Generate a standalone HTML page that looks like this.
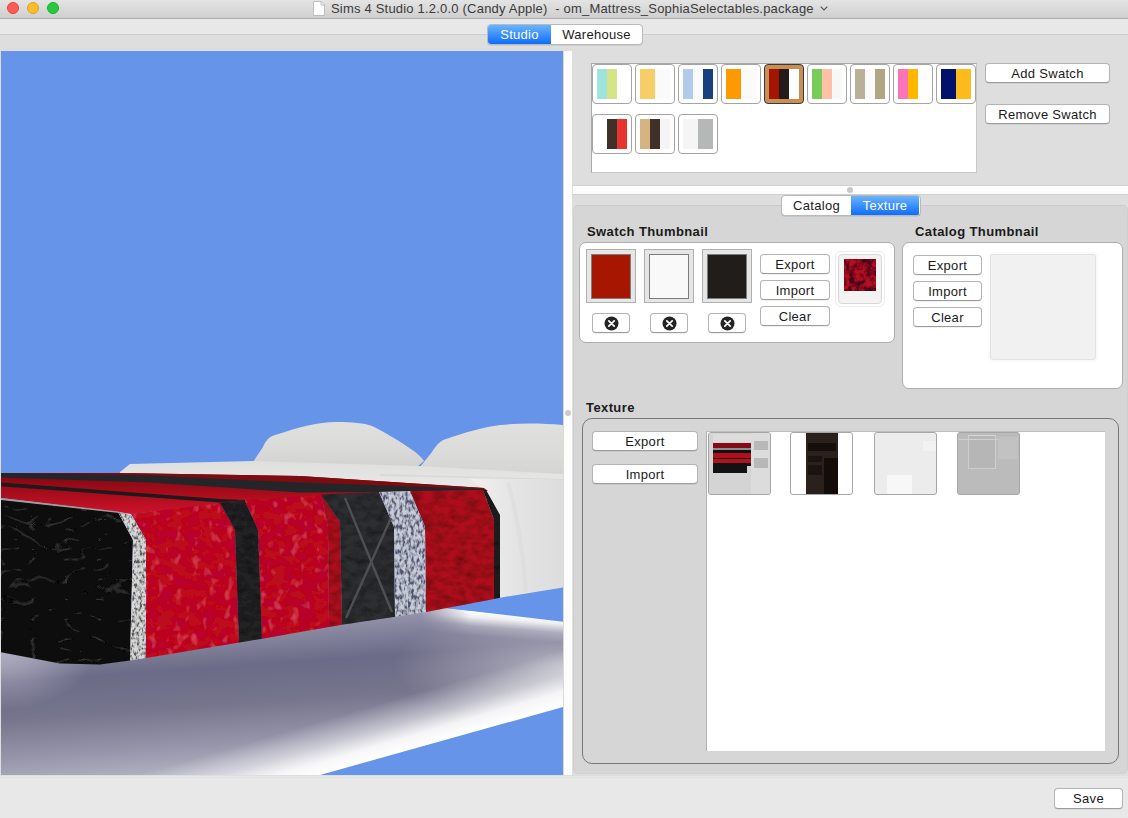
<!DOCTYPE html>
<html><head><meta charset="utf-8">
<style>
*{box-sizing:border-box;margin:0;padding:0}
html,body{width:1128px;height:818px;overflow:hidden;background:#e8e8e8;font-family:"Liberation Sans",sans-serif;font-size:13px;color:#1a1a1a;letter-spacing:0.3px}
.a{position:absolute}
#title{left:0;top:0;width:1128px;height:19px;background:linear-gradient(#e4e4e4,#cfcfcf);border-bottom:1px solid #adadad}
.light{width:12px;height:12px;border-radius:50%;top:2px}
#ttext{left:331px;top:1px;font-size:13px;color:#3a3a3a;letter-spacing:0.2px;white-space:pre}
#toolbar{left:0;top:19px;width:1128px;height:16px;background:#e8e8e8;border-bottom:1px solid #cdcdcd}
#content{left:0;top:35px;width:1128px;height:741px;background:#dedede}
.seg{height:21px;border-radius:4px;border:1px solid #b9b9b9;background:#fff;display:flex;overflow:hidden;box-shadow:0 0.5px 0.5px rgba(0,0,0,.15)}
.seg div{height:100%;text-align:center;line-height:19px;font-size:13px}
.seg .on{background:linear-gradient(#6cb3fa,#0d6efc);color:#fff}
#view{left:1px;top:51px;width:562px;height:724px;background:#6594e8;overflow:hidden}
#split{left:563px;top:51px;width:9px;height:724px;background:#fdfdfd;border-left:1px solid #dcd8d4}
#bottom{left:0;top:777px;width:1128px;height:41px;background:#e8e8e8;border-top:1px solid #e2e2e2}
.btn{background:#fff;border:1px solid #b4b4b4;border-bottom-color:#9c9c9c;border-radius:4px;text-align:center;font-size:13px;color:#1a1a1a;box-shadow:0 0.5px 0.5px rgba(0,0,0,.12)}
.sw{width:40px;height:40px;background:#fff;border:1px solid #a4a4a4;border-radius:4px}
.sw i{position:absolute;top:4px;height:30px}
.lbl{font-weight:bold;font-size:13px;color:#1a1a1a;letter-spacing:0.4px}
.grp{background:#fff;border:1px solid #adadad;border-radius:7px}
.well{width:50px;height:54px;background:#e6e6e6;border:1px solid #b0b0b0}
.well i{position:absolute;left:4px;top:4px;width:40px;height:45px;border:1px solid #7d7d7d}
.xb{width:38px;height:20px}
.xb b{position:absolute;left:11px;top:2px;width:14px;height:14px;border-radius:50%;background:#222;color:#fff}
.tt{width:63px;height:63px;border:1px solid #a6a6a6;border-radius:3px;overflow:hidden}
</style></head><body>
<div id="title" class="a">
  <div class="a light" style="left:7px;background:#fd5b55;border:0.5px solid #e0443e"></div>
  <div class="a light" style="left:27px;background:#fdbb2d;border:0.5px solid #dea123"></div>
  <div class="a light" style="left:47px;background:#27c93f;border:0.5px solid #1dad2b"></div>
  <svg class="a" style="left:313px;top:1px" width="12" height="15" viewBox="0 0 12 15"><path d="M0.5 0.5H8L11.5 4V14.5H0.5Z" fill="#fff" stroke="#b0b0b0" stroke-width="0.8"/><path d="M8 0.5V4H11.5" fill="none" stroke="#b0b0b0" stroke-width="0.8"/></svg>
  <div id="ttext" class="a">Sims 4 Studio 1.2.0.0 (Candy Apple)  - om_Mattress_SophiaSelectables.package</div>
  <svg class="a" style="left:820px;top:6px" width="8" height="5" viewBox="0 0 8 5"><path d="M0.7 0.7L4 4L7.3 0.7" fill="none" stroke="#555" stroke-width="1.2"/></svg>
</div>
<div id="toolbar" class="a"></div>
<div id="content" class="a"></div>
<div class="a seg" style="left:487px;top:24px;width:156px">
  <div class="on" style="width:63px">Studio</div><div style="width:91px">Warehouse</div>
</div>
<div id="view" class="a"><svg width="562" height="724" viewBox="1 51 562 724" style="position:absolute;left:0;top:0">
<defs>
 <linearGradient id="plat" gradientUnits="userSpaceOnUse" x1="300" y1="605" x2="312" y2="775">
  <stop offset="0" stop-color="#b4b3c4"/>
  <stop offset="0.12" stop-color="#8f8ea6"/>
  <stop offset="0.33" stop-color="#6c6b87"/>
  <stop offset="0.55" stop-color="#76758d"/>
  <stop offset="0.78" stop-color="#9695aa"/>
  <stop offset="1" stop-color="#bdbccb"/>
 </linearGradient>
 <linearGradient id="platHi" gradientUnits="userSpaceOnUse" x1="441" y1="741" x2="426" y2="690">
  <stop offset="0" stop-color="#ffffff" stop-opacity="1"/>
  <stop offset="0.25" stop-color="#ffffff" stop-opacity="0.9"/>
  <stop offset="0.55" stop-color="#ffffff" stop-opacity="0.45"/>
  <stop offset="1" stop-color="#ffffff" stop-opacity="0"/>
 </linearGradient>
 <linearGradient id="platTop" gradientUnits="userSpaceOnUse" x1="500" y1="613" x2="498" y2="638">
  <stop offset="0" stop-color="#ffffff" stop-opacity="1"/>
  <stop offset="0.25" stop-color="#ffffff" stop-opacity="0.85"/>
  <stop offset="0.6" stop-color="#ffffff" stop-opacity="0.25"/>
  <stop offset="1" stop-color="#ffffff" stop-opacity="0"/>
 </linearGradient>
 <linearGradient id="fadeX" gradientUnits="userSpaceOnUse" x1="420" y1="0" x2="470" y2="0">
  <stop offset="0" stop-color="#fff" stop-opacity="0"/><stop offset="1" stop-color="#fff" stop-opacity="1"/>
 </linearGradient>
 <mask id="mX"><rect x="0" y="0" width="600" height="800" fill="url(#fadeX)"/></mask>
 <linearGradient id="sheet" x1="0" y1="0" x2="0" y2="1">
  <stop offset="0" stop-color="#dededd"/><stop offset="1" stop-color="#ebebeb"/>
 </linearGradient>
 <linearGradient id="mat" x1="0" y1="0" x2="1" y2="0">
  <stop offset="0" stop-color="#f0f0f0"/><stop offset="0.5" stop-color="#e4e4e4"/><stop offset="1" stop-color="#dddddd"/>
 </linearGradient>
 <linearGradient id="pil" x1="0" y1="0" x2="0" y2="1">
  <stop offset="0" stop-color="#e0e0de"/><stop offset="0.6" stop-color="#dadad8"/><stop offset="1" stop-color="#d2d2d1"/>
 </linearGradient>
 <linearGradient id="topred" gradientUnits="userSpaceOnUse" x1="0" y1="473" x2="0" y2="512">
  <stop offset="0" stop-color="#7a0810"/><stop offset="0.45" stop-color="#a20c1a"/><stop offset="1" stop-color="#cc122a"/>
 </linearGradient>
 <filter id="noise" x="0" y="0" width="100%" height="100%">
  <feTurbulence type="fractalNoise" baseFrequency="0.09 0.14" numOctaves="3" seed="3" result="t"/>
  <feColorMatrix in="t" type="matrix" values="0 0 0 0 0  0 0 0 0 0  0 0 0 0 0  0 0 0 -1.1 0.75" result="m"/>
  <feComposite in="m" in2="SourceGraphic" operator="in" result="d"/>
  <feBlend in="SourceGraphic" in2="d" mode="multiply"/>
 </filter>
 <filter id="noiseL" x="0" y="0" width="100%" height="100%">
  <feTurbulence type="fractalNoise" baseFrequency="0.08 0.12" numOctaves="3" seed="9" result="t"/>
  <feColorMatrix in="t" type="matrix" values="0 0 0 0 1  0 0 0 0 1  0 0 0 0 1  0 0 0 -1.0 0.62" result="m"/>
  <feComposite in="m" in2="SourceGraphic" operator="in" result="d"/>
  <feBlend in="d" in2="SourceGraphic" mode="screen"/>
 </filter>
<filter id="swirl" x="0" y="0" width="100%" height="100%">
  <feTurbulence type="turbulence" baseFrequency="0.03 0.05" numOctaves="2" seed="5" result="t"/>
  <feColorMatrix in="t" type="matrix" values="0 0 0 0 0.22  0 0 0 0 0.22  0 0 0 0 0.22  -1.3 0 0 0 0.14" result="m"/>
  <feComposite in="m" in2="SourceGraphic" operator="in" result="d"/>
  <feMerge><feMergeNode in="SourceGraphic"/><feMergeNode in="d"/></feMerge>
 </filter>
 <filter id="speck" x="0" y="0" width="100%" height="100%">
  <feTurbulence type="fractalNoise" baseFrequency="0.35 0.2" numOctaves="2" seed="11" result="t"/>
  <feColorMatrix in="t" type="matrix" values="0 0 0 0 0.08  0 0 0 0 0.09  0 0 0 0 0.17  0 0 0 -3.2 2.0" result="m"/>
  <feComposite in="m" in2="SourceGraphic" operator="in" result="d"/>
  <feMerge><feMergeNode in="SourceGraphic"/><feMergeNode in="d"/></feMerge>
 </filter>
 <filter id="redtex" x="0" y="0" width="100%" height="100%">
  <feTurbulence type="fractalNoise" baseFrequency="0.07 0.1" numOctaves="3" seed="21" result="t"/>
  <feColorMatrix in="t" type="matrix" values="0 0 0 0 0.45  0 0 0 0 0.0  0 0 0 0 0.05  0 0 0 -1.6 0.9" result="dk"/>
  <feComposite in="dk" in2="SourceGraphic" operator="in" result="dk2"/>
  <feTurbulence type="fractalNoise" baseFrequency="0.12 0.09" numOctaves="2" seed="4" result="t2"/>
  <feColorMatrix in="t2" type="matrix" values="0 0 0 0 0.95  0 0 0 0 0.12  0 0 0 0 0.2  0 0 0 1.5 -0.9" result="lt"/>
  <feComposite in="lt" in2="SourceGraphic" operator="in" result="lt2"/>
  <feMerge><feMergeNode in="SourceGraphic"/><feMergeNode in="dk2"/><feMergeNode in="lt2"/></feMerge>
 </filter>
 <radialGradient id="platL" gradientUnits="userSpaceOnUse" cx="0" cy="650" r="60" gradientTransform="translate(0 650) scale(1.6 1) translate(0 -650)">
  <stop offset="0" stop-color="#b0afc2" stop-opacity="1"/>
  <stop offset="1" stop-color="#b0afc2" stop-opacity="0"/>
 </radialGradient>
<filter id="speckG" x="0" y="0" width="100%" height="100%">
  <feTurbulence type="fractalNoise" baseFrequency="0.4 0.25" numOctaves="2" seed="13" result="t"/>
  <feColorMatrix in="t" type="matrix" values="0 0 0 0 0.1  0 0 0 0 0.1  0 0 0 0 0.1  0 0 0 -3.4 2.0" result="m"/>
  <feComposite in="m" in2="SourceGraphic" operator="in" result="d"/>
  <feMerge><feMergeNode in="SourceGraphic"/><feMergeNode in="d"/></feMerge>
 </filter>
<radialGradient id="platR" gradientUnits="userSpaceOnUse" cx="563" cy="665" r="170" gradientTransform="translate(563 665) scale(1 0.35) translate(-563 -665)">
  <stop offset="0" stop-color="#ffffff" stop-opacity="0.45"/>
  <stop offset="1" stop-color="#ffffff" stop-opacity="0"/>
 </radialGradient>
</defs>
<rect x="1" y="51" width="563" height="724" fill="#6594e8"/>
<!-- platform -->
<polygon points="0,640 440,607 563,621.5 563,775 0,775" fill="url(#plat)"/>
<polygon points="0,640 440,607 563,621.5 563,775 0,775" fill="url(#platHi)"/>
<polygon points="0,600 120,600 120,720 0,720" fill="url(#platL)"/>
<polygon points="380,600 563,600 563,730 380,730" fill="url(#platR)"/>
<g mask="url(#mX)"><polygon points="380,602 563,619.5 563,690 380,670" fill="url(#platTop)"/></g>
<!-- bottom right blue triangle -->
<polygon points="320,775 563,707 563,775" fill="#6594e8"/>
<!-- blue wedge between mattress and platform -->
<polygon points="440,607.3 500,597.7 563,587.5 563,621.8" fill="#6594e8"/>
<!-- pillows -->
<path d="M253,462 L263,447 C266,440 269,437 275,435 C300,427 318,422 336,422 C352,422 364,423 372,426 C386,433 396,439 405,445 C414,451 420,455 424,461 L418,466 L253,466 Z" fill="url(#pil)"/>

<path d="M420,467 L432,452 C437,444 440,441 446,439 C466,432 484,427 500,425 C520,423 540,423 563,425 L563,480 L420,480 Z" fill="url(#pil)"/>
<!-- sheet top -->
<polygon points="120,472 130,464 253,461 418,466 563,474 563,490 484,492 120,482" fill="url(#sheet)"/>
<polygon points="380,474 563,479 563,480 380,476" fill="#d8cccc" opacity="0.5"/>
<!-- right mattress side -->
<polygon points="470,479 563,480 563,587.5 500,597.7 484,490" fill="url(#mat)"/>
<path d="M508,482 C518,520 524,560 526,592" stroke="#dadada" stroke-width="4" fill="none" opacity="0.5"/>
<!-- duvet top surface -->
<polygon points="0,473 120,473 300,476 484,488 488,491 245,501 131,514 118,512 0,498" fill="url(#topred)"/>
<polygon points="120,473 300,476 484,488 484,489 300,482.6 150,475.5" fill="#7a0c12"/>
<polygon points="0,473 150,475.5 300,482.6 484,489 484,491 300,492.5 150,482.5 0,477.5" fill="#232528"/>
<polygon points="0,482.5 220,499 245,500 220,502.4 0,486.3" fill="#1e1a1c"/>
<!-- front face -->
<polygon points="0,499.5 118,512 133,540 130,660.5 100,664.5 60,663.6 0,652" fill="#0e0e0e" filter="url(#swirl)"/>
<g filter="url(#redtex)">
<polygon points="131,514.0 220,503.0 235,530.0 239,642.5 146,657.9 146,540.0" fill="#bd101e"/>
<polygon points="244.5,500.0 321,495.0 328,527.0 329,627.1 262,638.7 258,530.0" fill="#bb101e"/>
</g>
<g filter="url(#noise)">
<polygon points="410,491.0 483,490.0 494,520.0 494,599.1 426,612.0 425,527.0" fill="#b0101c"/>
<polygon points="220,503.0 244.5,500.0 258,530.0 262,638.7 239,642.5 235,530.0" fill="#222223"/>
<polygon points="321,495.0 321,494.5 340,522.0 342,624.8 329,627.1 328,527.0" fill="#b00f1d"/>
<polygon points="321,494.5 379,492.0 394,527.0 395,616.7 342,624.8 340,522.0" fill="#2d2f31"/>
<polygon points="483,490.0 486,490.0 500,515.0 500,597.7 494,599.1 494,520.0" fill="#1f1f1f"/>
</g>
<g filter="url(#speckG)">
<polygon points="118,512.0 131,514.0 146,540.0 146,657.9 130,660.5 133,540.0" fill="#d8d8d8"/>
</g>
<g filter="url(#speck)">
<polygon points="379,492.0 410,491.0 425,527.0 426,612.0 395,616.7 394,527.0" fill="#c8ccd8"/>
</g>
<polygon points="0,498 118,511.5 124,513.5 0,500" fill="#a0a0a0"/>
<!-- X lines on charcoal -->
<path d="M345,498 L392,612 M391,518 L346,618" stroke="#4d4f52" stroke-width="2.4" fill="none"/>
</svg>

</div>
<div id="split" class="a"></div>
<div class="a" style="left:565px;top:410px;width:6px;height:6px;border-radius:50%;background:#cbcbcb"></div>

<!-- swatch list -->
<div class="a" style="left:591px;top:63px;width:386px;height:110px;background:#fff;border:1px solid #a9a9a9;border-right-color:#c8c8c8;border-bottom-color:#c8c8c8"></div>
<div class="a sw" style="left:592px;top:64px"><i style="left:4px;width:10px;background:#9ce4dc"></i><i style="left:14px;width:10px;background:#d5e487"></i><i style="left:24px;width:10px;background:#ffffff"></i></div>
<div class="a sw" style="left:635px;top:64px"><i style="left:4px;width:15px;background:#f7cd67"></i><i style="left:19px;width:15px;background:#fafafa"></i></div>
<div class="a sw" style="left:678px;top:64px"><i style="left:4px;width:10px;background:#b3cbeb"></i><i style="left:14px;width:10px;background:#fafafa"></i><i style="left:24px;width:10px;background:#17417f"></i></div>
<div class="a sw" style="left:721px;top:64px"><i style="left:4px;width:15px;background:#fd9a00"></i><i style="left:19px;width:15px;background:#fafafa"></i></div>
<div class="a" style="left:764px;top:64px;width:40px;height:40px;background:#c98f55;border:1px solid #3a3a3a;border-radius:4px"><i class="a" style="left:4px;top:4px;width:10px;height:30px;background:#a21500"></i><i class="a" style="left:14px;top:4px;width:10px;height:30px;background:#231c18"></i><i class="a" style="left:24px;top:4px;width:10px;height:30px;background:#fff"></i></div>
<div class="a sw" style="left:807px;top:64px"><i style="left:4px;width:10px;background:#78cd5a"></i><i style="left:14px;width:10px;background:#fec0a6"></i><i style="left:24px;width:10px;background:#f7f7f5"></i></div>
<div class="a sw" style="left:850px;top:64px"><i style="left:4px;width:10px;background:#bab099"></i><i style="left:14px;width:10px;background:#fafafa"></i><i style="left:24px;width:10px;background:#b0a684"></i></div>
<div class="a sw" style="left:893px;top:64px"><i style="left:4px;width:10px;background:#fd73b8"></i><i style="left:14px;width:10px;background:#fdb700"></i><i style="left:24px;width:10px;background:#ffffff"></i></div>
<div class="a sw" style="left:936px;top:64px"><i style="left:4px;width:15px;background:#02126a"></i><i style="left:19px;width:15px;background:#fdbc1b"></i></div>
<div class="a sw" style="left:592px;top:114px"><i style="left:4px;width:10px;background:#ffffff"></i><i style="left:14px;width:10px;background:#3f3127"></i><i style="left:24px;width:10px;background:#e83330"></i></div>
<div class="a sw" style="left:635px;top:114px"><i style="left:4px;width:10px;background:#d5b47f"></i><i style="left:14px;width:10px;background:#3f3127"></i><i style="left:24px;width:10px;background:#f5f5f5"></i></div>
<div class="a sw" style="left:678px;top:114px"><i style="left:4px;width:15px;background:#f5f5f5"></i><i style="left:19px;width:15px;background:#b5b8b6"></i></div>
<div class="a btn" style="left:985px;top:63px;width:125px;height:20px;line-height:19px">Add Swatch</div>
<div class="a btn" style="left:985px;top:104px;width:125px;height:20px;line-height:19px">Remove Swatch</div>
<!-- splitter -->
<div class="a" style="left:573px;top:185px;width:555px;height:10px;background:#fdfdfd;border-top:1px solid #d0d0d0;border-bottom:1px solid #d0d0d0"></div>
<div class="a" style="left:847px;top:187px;width:6px;height:6px;border-radius:50%;background:#c8c8c8"></div>
<!-- tab panel -->
<div class="a" style="left:573px;top:205px;width:555px;height:569px;background:#d6d6d6;border-top:1px solid #cacaca;border-left:1px solid #d0d0d0;border-bottom:1px solid #d2d2d2;border-right:1px solid #d0d0d0;border-radius:5px"></div>
<div class="a seg" style="left:781px;top:195px;width:140px">
  <div style="width:69px">Catalog</div><div class="on" style="width:68px">Texture</div>
</div>
<div class="a lbl" style="left:587px;top:224px">Swatch Thumbnail</div>
<div class="a lbl" style="left:915px;top:224px">Catalog Thumbnail</div>
<div class="a grp" style="left:579px;top:242px;width:316px;height:101px"></div>
<div class="a well" style="left:586px;top:249px"><i style="background:#a61600"></i></div>
<div class="a well" style="left:644px;top:249px"><i style="background:#f9f9f9"></i></div>
<div class="a well" style="left:702px;top:249px"><i style="background:#211d1b"></i></div>
<div class="a btn xb" style="left:592px;top:313px"><svg class="a" style="left:11px;top:2px" width="15" height="15" viewBox="0 0 15 15"><circle cx="7.5" cy="7.5" r="7" fill="#242424"/><path d="M4.8 4.8L10.2 10.2M10.2 4.8L4.8 10.2" stroke="#fff" stroke-width="1.7" stroke-linecap="round"/></svg></div>
<div class="a btn xb" style="left:650px;top:313px"><svg class="a" style="left:11px;top:2px" width="15" height="15" viewBox="0 0 15 15"><circle cx="7.5" cy="7.5" r="7" fill="#242424"/><path d="M4.8 4.8L10.2 10.2M10.2 4.8L4.8 10.2" stroke="#fff" stroke-width="1.7" stroke-linecap="round"/></svg></div>
<div class="a btn xb" style="left:708px;top:313px"><svg class="a" style="left:11px;top:2px" width="15" height="15" viewBox="0 0 15 15"><circle cx="7.5" cy="7.5" r="7" fill="#242424"/><path d="M4.8 4.8L10.2 10.2M10.2 4.8L4.8 10.2" stroke="#fff" stroke-width="1.7" stroke-linecap="round"/></svg></div>
<div class="a btn" style="left:760px;top:254px;width:70px;height:20px;line-height:19px">Export</div>
<div class="a btn" style="left:760px;top:280px;width:70px;height:20px;line-height:19px">Import</div>
<div class="a btn" style="left:760px;top:306px;width:70px;height:20px;line-height:19px">Clear</div>
<div class="a" style="left:835px;top:251px;width:50px;height:56px;background:#fff;border:1px solid #ececec;border-radius:6px"></div><div class="a" style="left:838px;top:254px;width:44px;height:50px;background:#f3f3f3;border:1px solid #d8d8d8;border-radius:4px"></div>
<svg class="a" style="left:844px;top:259px" width="32" height="32" viewBox="0 0 32 32"><defs><filter id="dam" x="0" y="0" width="100%" height="100%"><feTurbulence type="fractalNoise" baseFrequency="0.18" numOctaves="3" seed="7"/><feColorMatrix type="matrix" values="0 0 0 0 0.06  0 0 0 0 0  0 0 0 0 0.01  0 0 0 -2.8 1.8"/></filter></defs><rect width="32" height="32" fill="#b5101d"/><rect width="32" height="32" filter="url(#dam)"/></svg>
<div class="a grp" style="left:902px;top:242px;width:221px;height:147px"></div>
<div class="a btn" style="left:913px;top:255px;width:69px;height:20px;line-height:19px">Export</div>
<div class="a btn" style="left:913px;top:281px;width:69px;height:20px;line-height:19px">Import</div>
<div class="a btn" style="left:913px;top:307px;width:69px;height:20px;line-height:19px">Clear</div>
<div class="a" style="left:988px;top:252px;width:110px;height:110px;background:#f1f1f1;border:2px solid #fafafa;border-radius:5px;box-shadow:inset 0 0 0 1px #e2e2e2"></div>
<div class="a lbl" style="left:586px;top:400px">Texture</div>
<div class="a" style="left:582px;top:418px;width:537px;height:346px;border:1px solid #787878;border-radius:10px"></div>
<div class="a btn" style="left:592px;top:431px;width:106px;height:20px;line-height:19px">Export</div>
<div class="a btn" style="left:592px;top:464px;width:106px;height:20px;line-height:19px">Import</div>
<div class="a" style="left:706px;top:431px;width:399px;height:320px;background:#fff;border-left:1px solid #b0b0b0;border-top:1px solid #c0c0c0"></div>
<div class="a tt" style="left:708px;top:432px;background:#d0d0d0">
<i class="a" style="left:0;top:0;width:42px;height:61px;background:#d4d4d4"></i>
<i class="a" style="left:4px;top:1px;width:38px;height:8px;background:#dcdcdc"></i>
<i class="a" style="left:42px;top:0;width:20px;height:61px;background:#dcdcdc"></i>
<i class="a" style="left:45px;top:8px;width:14px;height:9px;background:#b8b8b8"></i>
<i class="a" style="left:45px;top:25px;width:14px;height:10px;background:#b8b8b8"></i>
<i class="a" style="left:4px;top:10px;width:38px;height:30px;background:#121212"></i>
<i class="a" style="left:4px;top:10px;width:38px;height:5px;background:#850b14"></i>
<i class="a" style="left:4px;top:15px;width:38px;height:1.5px;background:#8a8c98"></i>
<i class="a" style="left:4px;top:20px;width:38px;height:5px;background:#b0101c"></i>
<i class="a" style="left:4px;top:26px;width:38px;height:4px;background:#b5101c"></i>
<i class="a" style="left:38px;top:33px;width:4px;height:7px;background:#d4d4d4"></i>
</div>
<div class="a tt" style="left:790px;top:432px;background:#fff">
<i class="a" style="left:15px;top:0;width:32px;height:61px;background:#2b211c"></i>
<i class="a" style="left:17px;top:10px;width:28px;height:8px;background:#160e0b"></i>
<i class="a" style="left:17px;top:23px;width:14px;height:6px;background:#1c1310"></i>
<i class="a" style="left:33px;top:25px;width:14px;height:36px;background:#140c09"></i>
<i class="a" style="left:17px;top:32px;width:14px;height:10px;background:#1c1310"></i>
</div>
<div class="a tt" style="left:874px;top:432px;background:#ececec">
<i class="a" style="left:12px;top:42px;width:25px;height:20px;background:#f7f7f7"></i>
<i class="a" style="left:48px;top:8px;width:14px;height:10px;background:#f2f2f2"></i>
</div>
<div class="a tt" style="left:957px;top:432px;background:#bbbbbb">
<i class="a" style="left:10px;top:2px;width:28px;height:34px;border:1px solid #cfcfcf;border-top-color:#d6d6d6;background:#b6b6b6"></i>
<i class="a" style="left:0;top:6px;width:40px;height:1px;background:#d0d0d0"></i>
<i class="a" style="left:40px;top:4px;width:20px;height:22px;background:#c2c2c2"></i>
</div>

<div id="bottom" class="a"></div>
<div class="a btn" style="left:1054px;top:788px;width:69px;height:21px;line-height:19px">Save</div>
</body></html>
